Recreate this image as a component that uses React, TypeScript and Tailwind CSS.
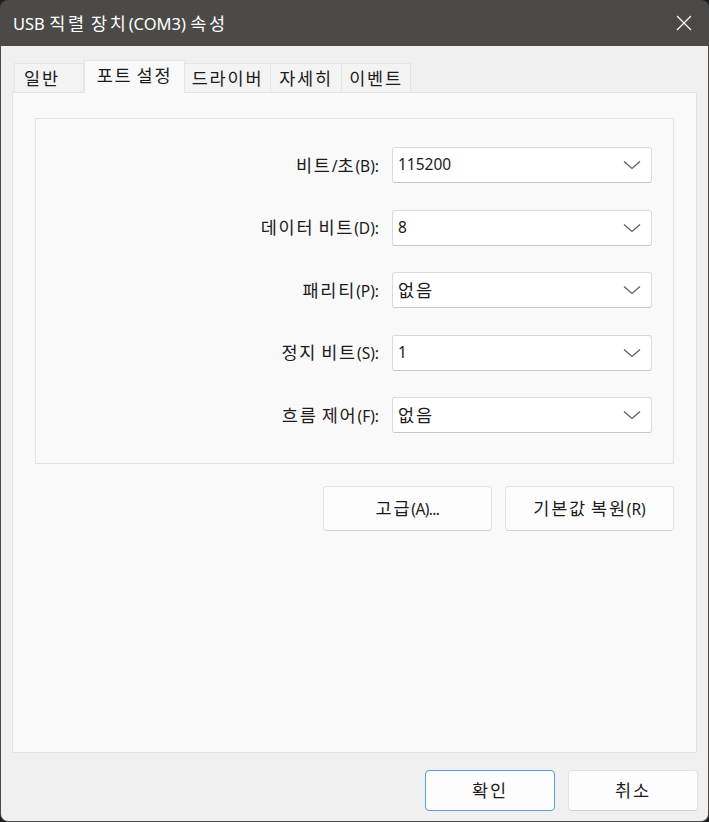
import React from "react";

const font = { fontFamily: '"Noto Sans", "Noto Sans CJK KR", sans-serif' };

const HANGUL = /([\uAC00-\uD7A3]+)/;

function T({ s, h }: { s: string; h: string }) {
  const parts = s.split(HANGUL).filter((p) => p.length > 0);
  return (
    <span className="whitespace-pre">
      {parts.map((p, i) =>
        /[\uAC00-\uD7A3]/.test(p) ? (
          <span key={i} className={h}>
            {p}
          </span>
        ) : (
          <span key={i}>{p}</span>
        )
      )}
    </span>
  );
}

const HK = "font-['Noto_Sans_CJK_KR'] text-[17.5px] tracking-[1.8px]";
const HT = "font-['Noto_Sans_CJK_KR'] text-[17.5px] tracking-[2.7px]";

function Chevron() {
  return (
    <svg width="18" height="10" viewBox="0 0 18 10" className="shrink-0">
      <path d="M1 1.5 L9 8.5 L17 1.5" fill="none" stroke="#5f5f5f" strokeWidth="1.3" />
    </svg>
  );
}

function Row({ label, value }: { label: string; value: string }) {
  return (
    <div className="flex items-center justify-end">
      <div className="text-[15.5px] text-[#1b1b1b] mr-[13px] whitespace-nowrap">
        <T s={label} h={HK} />
      </div>
      <div className="w-[260px] h-[36px] bg-white border border-[#dadada] border-b-[#c6c6c6] rounded-[3px] flex items-center justify-between pl-[5px] pr-[10px]">
        <span className="text-[15.5px] text-[#1b1b1b]">
          <T s={value} h={HK} />
        </span>
        <Chevron />
      </div>
    </div>
  );
}

const tabs = [
  { t: "일반", w: 70, pad: "pr-[14px]" },
  { t: "포트 설정", w: 101, active: true, pad: "" },
  { t: "드라이버", w: 87, pad: "" },
  { t: "자세히", w: 72, pad: "" },
  { t: "이벤트", w: 70, pad: "" },
];

const btn =
  "bg-[#fdfdfd] border border-[#e2e2e2] border-b-[#d0d0d0] rounded-[4px] text-[15.5px] text-[#1b1b1b]";

export default function App() {
  return (
    <div className="w-[709px] h-[822px] bg-[#1e1e1e]" style={font}>
      <div className="w-full h-full flex flex-col rounded-[8px] overflow-hidden">
        <div className="h-[46px] shrink-0 bg-[#4b4a48] flex items-center justify-between pl-[13px] pr-[17px]">
          <span className="text-white text-[16.5px] leading-none">
            <T s="USB 직렬 장치(COM3) 속성" h={HT} />
          </span>
          <svg width="16" height="16" viewBox="0 0 16 16">
            <path d="M1 1 L15 15 M15 1 L1 15" stroke="#ffffff" strokeWidth="1.2" fill="none" />
          </svg>
        </div>
        <div className="flex-1 flex flex-col bg-[#f0f0f0] border-x border-b border-[#4b4a48] rounded-b-[8px] pl-[11px] pr-[11px]">
          <div className="flex items-end pt-[13px] pl-[2px] h-[46px]">
            {tabs.map((tab) =>
              tab.active ? (
                <div
                  key={tab.t}
                  style={{ width: tab.w }}
                  className="h-[33px] relative top-[1px] z-10 bg-[#f9f9f9] border-x border-t border-[#e5e5e5] flex items-center justify-center text-[15.5px] text-[#1b1b1b] pb-[4px]"
                >
                  <T s={tab.t} h={HK} />
                </div>
              ) : (
                <div
                  key={tab.t}
                  style={{ width: tab.w }}
                  className={
                    "h-[29px] bg-[#f3f3f3] border-x border-t border-[#e5e5e5] -ml-px first:ml-0 flex items-center justify-center text-[15.5px] text-[#1b1b1b] " +
                    tab.pad
                  }
                >
                  <T s={tab.t} h={HK} />
                </div>
              )
            )}
          </div>
          <div className="h-[661px] bg-[#f9f9f9] border border-[#e3e3e3] pt-[25px] px-[22px]">
            <div className="border border-[#e3e3e3] h-[346px] pt-[28px] pr-[21px] flex flex-col gap-[26.5px]">
              <Row label="비트/초(B):" value="115200" />
              <Row label="데이터 비트(D):" value="8" />
              <Row label="패리티(P):" value="없음" />
              <Row label="정지 비트(S):" value="1" />
              <Row label="흐름 제어(F):" value="없음" />
            </div>
            <div className="flex justify-end gap-[13px] mt-[22px]">
              <button className={"w-[169px] h-[45px] tracking-[-0.6px] " + btn}>
                <T s="고급(A)..." h={HK} />
              </button>
              <button className={"w-[169px] h-[45px] " + btn}>
                <T s="기본값 복원(R)" h={HK} />
              </button>
            </div>
          </div>
          <div className="flex justify-end gap-[13px] mt-[17px] mr-[-1px]">
            <button className="w-[130px] h-[41px] bg-[#fdfdfd] border border-[#5b9bd8] rounded-[4px] text-[15.5px] text-[#1b1b1b]">
              <T s="확인" h={HK} />
            </button>
            <button className={"w-[130px] h-[41px] " + btn}>
              <T s="취소" h={HK} />
            </button>
          </div>
        </div>
      </div>
    </div>
  );
}
